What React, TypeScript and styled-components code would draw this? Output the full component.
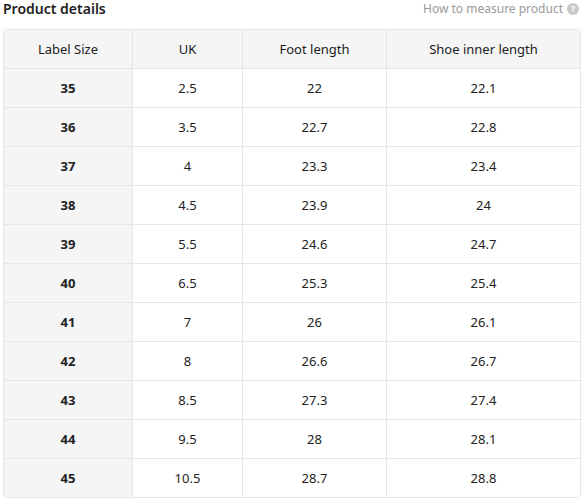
import React from "react";
import styled, { createGlobalStyle } from "styled-components";

const Global = createGlobalStyle`
  html, body { margin: 0; padding: 0; background: #fff; }
  body { font-family: "Noto Sans", "Open Sans", sans-serif; color: #222; }
`;

const Page = styled.div`
  width: 578px;
  margin-left: 3px;
`;

const Header = styled.div`
  display: flex;
  align-items: center;
  justify-content: space-between;
  height: 17px;
  margin-bottom: 12px;
`;

const Title = styled.h2`
  margin: 0;
  font-size: 14px;
  font-weight: 600;
  color: #222;
  line-height: 17px;
`;

const Help = styled.div`
  display: flex;
  align-items: center;
  gap: 4px;
  font-size: 12px;
  color: #999;
  margin-right: 2px;
`;

const Q = styled.span`
  width: 12px;
  height: 12px;
  border-radius: 50%;
  background: #c8c8c8;
  color: #fff;
  font-size: 9px;
  font-weight: 700;
  display: inline-flex;
  align-items: center;
  justify-content: center;
  line-height: 1;
`;

const Table = styled.div`
  border: 1px solid #e6e6e6;
  border-radius: 4px;
  overflow: hidden;
  display: grid;
  grid-template-columns: 129px 110px 144px 1fr;
`;

const Cell = styled.div<{ $head?: boolean; $first?: boolean; $lastCol?: boolean; $lastRow?: boolean }>`
  height: 38px;
  display: flex;
  align-items: center;
  justify-content: center;
  font-size: 13px;
  color: #222;
  background: ${(p) => (p.$head || p.$first ? "#f5f5f5" : "#fff")};
  font-weight: ${(p) => (p.$first && !p.$head ? 700 : 400)};
  border-right: ${(p) => (p.$lastCol ? "none" : "1px solid #e6e6e6")};
  border-bottom: ${(p) => (p.$lastRow ? "none" : "1px solid #e6e6e6")};
`;

const head = ["Label Size", "UK", "Foot length", "Shoe inner length"];
const rows = [
  ["35", "2.5", "22", "22.1"],
  ["36", "3.5", "22.7", "22.8"],
  ["37", "4", "23.3", "23.4"],
  ["38", "4.5", "23.9", "24"],
  ["39", "5.5", "24.6", "24.7"],
  ["40", "6.5", "25.3", "25.4"],
  ["41", "7", "26", "26.1"],
  ["42", "8", "26.6", "26.7"],
  ["43", "8.5", "27.3", "27.4"],
  ["44", "9.5", "28", "28.1"],
  ["45", "10.5", "28.7", "28.8"],
];

export default function App() {
  return (
    <Page>
      <Global />
      <Header>
        <Title>Product details</Title>
        <Help>
          How to measure product <Q>?</Q>
        </Help>
      </Header>
      <Table>
        {head.map((h, i) => (
          <Cell key={h} $head $lastCol={i === 3}>
            {h}
          </Cell>
        ))}
        {rows.map((r, ri) =>
          r.map((c, ci) => (
            <Cell
              key={ri + "-" + ci}
              $first={ci === 0}
              $lastCol={ci === 3}
              $lastRow={ri === rows.length - 1}
            >
              {c}
            </Cell>
          ))
        )}
      </Table>
    </Page>
  );
}
